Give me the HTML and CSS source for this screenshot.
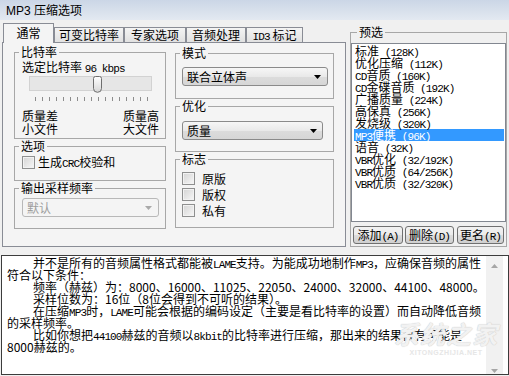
FILE: index.html
```html
<!DOCTYPE html>
<html lang="zh-CN">
<head>
<meta charset="utf-8">
<title>MP3 压缩选项</title>
<link rel="stylesheet" href="styles.css">
</head>
<body>
<div class="titlebar">MP3 压缩选项</div>
<div class="top">
  <div class="tabctl">
    <div class="tabstrip">
      <div class="tab on w1">通常</div>
      <div class="tab w2">可变比特率</div>
      <div class="tab w3">专家选项</div>
      <div class="tab w4">音频处理</div>
      <div class="tab w5"><span class="m">ID3</span> 标记</div>
    </div>
    <div class="panel">
      <div class="col c1">
        <fieldset class="g g-bit">
          <legend>比特率</legend>
          <div class="gb">
            <div class="rate">选定比特率 <span class="m">96 kbps</span></div>
            <div class="slider">
              <div class="track"></div>
              <svg class="thumb" width="9" height="17" viewBox="0 0 9 17">
                <defs><linearGradient id="tg" x1="0" y1="0" x2="0" y2="1"><stop offset="0" stop-color="#ffffff"/><stop offset="1" stop-color="#d6d6d6"/></linearGradient></defs>
                <path d="M0.5,2.5 a2,2 0 0 1 2,-2 h4 a2,2 0 0 1 2,2 v10 a4,3.8 0 0 1 -8,0 z" fill="url(#tg)" stroke="#6e6e6e"/>
              </svg>
            </div>
            <div class="ticks"></div>
            <div class="qrow">
              <div>质量差<br>小文件</div>
              <div class="r">质量高<br>大文件</div>
            </div>
          </div>
        </fieldset>
        <fieldset class="g g-opt">
          <legend>选项</legend>
          <div class="gb">
            <div class="chk"><span class="box"></span><span>生成<span class="m">CRC</span>校验和</span></div>
          </div>
        </fieldset>
        <fieldset class="g g-freq">
          <legend>输出采样频率</legend>
          <div class="gb">
            <div class="sel dis s1"><span>默认</span><svg width="7" height="4" viewBox="0 0 7 4"><polygon points="0,0 7,0 3.5,4" fill="#a9a9a9"/></svg></div>
          </div>
        </fieldset>
      </div>
      <div class="col c2">
        <fieldset class="g g-mode">
          <legend>模式</legend>
          <div class="gb">
            <div class="sel s2"><span>联合立体声</span><svg width="7" height="4" viewBox="0 0 7 4"><polygon points="0,0 7,0 3.5,4" fill="#000"/></svg></div>
          </div>
        </fieldset>
        <fieldset class="g g-optz">
          <legend>优化</legend>
          <div class="gb">
            <div class="sel s3"><span>质量</span><svg width="7" height="4" viewBox="0 0 7 4"><polygon points="0,0 7,0 3.5,4" fill="#000"/></svg></div>
          </div>
        </fieldset>
        <fieldset class="g g-flag">
          <legend>标志</legend>
          <div class="gb flags">
            <div class="chk"><span class="box"></span><span>原版</span></div>
            <div class="chk"><span class="box"></span><span>版权</span></div>
            <div class="chk"><span class="box"></span><span>私有</span></div>
          </div>
        </fieldset>
      </div>
    </div>
  </div>
  <fieldset class="g preset">
    <legend>预选</legend>
    <ul class="list">
      <li>标准<span class="m"> (128K)</span></li>
      <li>优化压缩<span class="m"> (112K)</span></li>
      <li><span class="m">CD</span>音质<span class="m"> (160K)</span></li>
      <li><span class="m">CD</span>金碟音质<span class="m"> (192K)</span></li>
      <li>广播质量<span class="m"> (224K)</span></li>
      <li>高保真<span class="m"> (256K)</span></li>
      <li>发烧级<span class="m"> (320K)</span></li>
      <li class="hl"><span class="m">MP3</span>便携<span class="m"> (96K)</span></li>
      <li>语音<span class="m"> (32K)</span></li>
      <li><span class="m">VBR</span>优化<span class="m"> (32/192K)</span></li>
      <li><span class="m">VBR</span>优质<span class="m"> (64/256K)</span></li>
      <li><span class="m">VBR</span>优质<span class="m"> (32/320K)</span></li>
    </ul>
    <div class="btns">
      <div class="btn b1">添加<span class="m">(A)</span></div>
      <div class="btn b2">删除<span class="m">(D)</span></div>
      <div class="btn b3">更名<span class="m">(R)</span></div>
    </div>
  </fieldset>
</div>
<div class="textbox">
  <div class="tx">
    <div class="ln ind">并不是所有的音频属性格式都能被<span class="m">LAME</span>支持。为能成功地制作<span class="m">MP3</span>，应确保音频的属性</div>
    <div class="ln">符合以下条件：</div>
    <div class="ln ind">频率（赫兹）为：8000、16000、11025、22050、24000、32000、44100、48000。</div>
    <div class="ln ind">采样位数为：16位（8位会得到不可听的结果）。</div>
    <div class="ln ind">在压缩<span class="m">MP3</span>时，<span class="m">LAME</span>可能会根据的编码设定（主要是看比特率的设置）而自动降低音频</div>
    <div class="ln">的采样频率。</div>
    <div class="ln ind">比如你想把<span class="m">44100</span>赫兹的音频以<span class="m">8kbit</span>的比特率进行压缩，那出来的结果很有可能是</div>
    <div class="ln">8000赫兹的。</div>
  </div>
  <div class="sbar">
    <svg class="up" width="7" height="4" viewBox="0 0 7 4"><polygon points="0,4 7,4 3.5,0" fill="#a6a6a6"/></svg>
    <svg class="dn" width="7" height="4" viewBox="0 0 7 4"><polygon points="0,0 7,0 3.5,4" fill="#a6a6a6"/></svg>
  </div>
  <div class="wm"><span class="wm1">系统之家</span><span class="wm2">XITONGZHIJIA.NET</span></div>
</div>
</body>
</html>
```
FILE: styles.css
```css
* { box-sizing: border-box; }
html, body { margin: 0; padding: 0; }
body {
  width: 509px;
  height: 376px;
  overflow: hidden;
  background: #f0f0f0;
  color: #000;
  font: 12px/14px "Noto Sans CJK SC", "Liberation Sans", sans-serif;
}
.m {
  font-family: "Liberation Mono", monospace;
  font-size: 11px;
  letter-spacing: -0.9px;
}

/* title bar */
.titlebar {
  height: 20px;
  padding: 3px 0 0 6px;
  line-height: 17px;
  font-family: "Liberation Sans", "Noto Sans CJK SC", sans-serif;
  background: linear-gradient(#cbd6e6, #e3e9f1);
}

.top {
  display: flex;
  align-items: flex-start;
  padding: 3px 0 0 2px;
}

/* tabs */
.tabctl { width: 344px; }
.tabstrip {
  display: flex;
  align-items: flex-end;
  height: 19px;
  padding-left: 1px;
}
.tab {
  height: 15px;
  border: 1px solid #898c95;
  border-bottom: none;
  background: linear-gradient(#f4f4f4, #e1e1e1);
  text-align: center;
  line-height: 14px;
}
.tab.on {
  height: 20px;
  margin-bottom: -1px;
  padding-top: 2px;
  background: #f4f4f4;
  position: relative;
  z-index: 1;
}
.w1 { width: 51px; }
.w2 { width: 70px; }
.w3 { width: 62px; }
.w4 { width: 60px; }
.w5 { width: 57px; }

.panel {
  height: 205px;
  border: 1px solid #898c95;
  background: #f4f4f4;
  display: flex;
  gap: 9px;
  padding: 2px 0 0 11px;
}
.col { display: flex; flex-direction: column; }
.c1 { width: 152px; }
.c2 { width: 159px; margin-top: 1px; }

/* group boxes */
fieldset.g {
  margin: 0;
  padding: 0;
  min-width: 0;
  border: 1px solid #a7a7a7;
}
fieldset.g > legend {
  margin-left: 4px;
  padding: 0 2px;
  height: 14px;
  line-height: 14px;
}
.gb { padding-left: 7px; padding-right: 6px; }
.c2 .gb { padding-left: 6px; }

.g-bit .gb { padding-top: 2px; padding-bottom: 3px; }
.rate { line-height: 12px; height: 12px; }
.slider {
  position: relative;
  margin: 3px 0 0 7px;
  width: 123px;
  height: 17px;
}
.track {
  margin-top: 1px;
  height: 15px;
  background: #e6e6e6;
  border: 1px solid #d2d2d2;
}
.thumb { position: absolute; left: 64px; top: 0; }
.ticks {
  margin: 4px 0 0 13px;
  width: 113px;
  height: 4px;
  background: repeating-linear-gradient(to right, #8c8c8c 0 1px, transparent 1px 7px);
}
.qrow {
  margin-top: 8px;
  display: flex;
  justify-content: space-between;
  line-height: 13px;
}
.qrow .r { text-align: right; }

.g-opt { margin-top: 2px; }
.g-opt .gb { padding-top: 3px; padding-bottom: 11px; }
.g-freq { margin-top: 3px; }
.g-freq .gb { padding-top: 3px; padding-bottom: 11px; }

.g-mode .gb { padding-top: 7px; padding-bottom: 12px; }
.g-optz { margin-top: 2px; }
.g-optz .gb { padding-top: 8px; padding-bottom: 11px; }
.g-flag { margin-top: 4px; }
.g-flag .gb { padding-top: 6px; padding-bottom: 10px; }

/* checkboxes */
.chk {
  display: flex;
  align-items: center;
  gap: 3px;
  height: 13px;
  line-height: 13px;
}
.flags { display: flex; flex-direction: column; gap: 3px; }
.flags .chk { gap: 7px; }
.box {
  width: 13px;
  height: 13px;
  flex: none;
  border: 1px solid #8e8f8f;
  background: linear-gradient(135deg, #d4d4d4, #f7f7f7);
  box-shadow: inset 0 0 0 1px #f2f2f2;
}

/* selects */
.sel {
  height: 19px;
  border: 1px solid #8a8a8a;
  border-radius: 3px;
  background: linear-gradient(#f6f6f6, #e9e9e9 50%, #dcdcdc 51%, #d6d6d6);
  display: flex;
  align-items: center;
  justify-content: space-between;
  padding: 0 6px 0 4px;
  line-height: 16px;
}
.sel.dis {
  border-color: #b8b8b8;
  background: #f4f4f4;
  color: #9d9d9d;
}
.s1 { width: 137px; }
.s2 { width: 146px; }
.s3 { width: 141px; padding-right: 5px; }

/* presets */
fieldset.preset {
  margin: 2px 0 0 4px;
  width: 157px;
}
fieldset.preset > legend { margin-left: 6px; }
.list {
  list-style: none;
  margin: 4px 0 0;
  padding: 1px 0 0;
  height: 179px;
  background: #fff;
  border: 1px solid #828790;
}
.list li {
  height: 12px;
  line-height: 12px;
  margin: 0 1px 0 2px;
  padding-left: 1px;
  white-space: nowrap;
}
.list li .m { line-height: 12px; }
.list li.hl { background: #3399ff; color: #fff; }
.btns {
  display: flex;
  gap: 2px;
  margin-top: 4px;
  padding: 0 0 2px 2px;
}
.btn {
  height: 18px;
  border: 1px solid #707070;
  border-radius: 3px;
  background: linear-gradient(#f2f2f2, #ebebeb 50%, #dddddd 51%, #cfcfcf);
  text-align: center;
  line-height: 16px;
}
.b1 { width: 50px; }
.b2 { width: 49px; }
.b3 { width: 47px; margin-left: 1px; }

/* text box */
.textbox {
  position: relative;
  margin: 8px 0 0 1px;
  width: 508px;
  height: 120px;
  border: 1px solid #3c3c3c;
  background: #fff;
  display: flex;
  overflow: hidden;
}
.tx {
  flex: 1;
  padding: 1px 0 0 5px;
  line-height: 12px;
}
.ln { height: 12px; white-space: nowrap; }
.ln.ind { padding-left: 26px; }
.ln .m { line-height: 12px; }
.sbar {
  width: 17px;
  margin-right: 5px;
  background: #f1f1f1;
  display: flex;
  flex-direction: column;
  justify-content: space-between;
  align-items: center;
  padding: 8px 0 1px;
}
.wm {
  position: absolute;
  left: 392px;
  top: 62px;
  display: flex;
  flex-direction: column;
  align-items: center;
  color: rgba(255, 255, 255, 0.75);
  pointer-events: none;
}
.wm1 {
  font-size: 25px;
  line-height: 30px;
  font-weight: bold;
  font-style: italic;
  letter-spacing: 1px;
  text-shadow: 0 0 1px #cccccc, 0 0 1px #cccccc;
}
.wm2 {
  font-family: "Liberation Sans", sans-serif;
  font-size: 7px;
  line-height: 9px;
  font-weight: bold;
  color: #e6e6e6;
  letter-spacing: 0.5px;
}
```
